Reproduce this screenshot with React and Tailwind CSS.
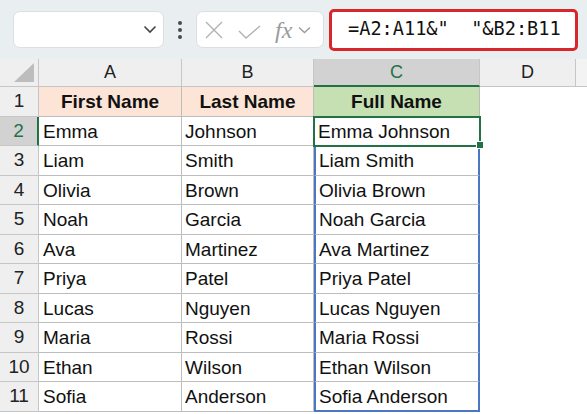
import React from "react";

const rows = [
  ["Emma", "Johnson"],
  ["Liam", "Smith"],
  ["Olivia", "Brown"],
  ["Noah", "Garcia"],
  ["Ava", "Martinez"],
  ["Priya", "Patel"],
  ["Lucas", "Nguyen"],
  ["Maria", "Rossi"],
  ["Ethan", "Wilson"],
  ["Sofia", "Anderson"],
];

const font = { fontFamily: '"Liberation Sans", Arial, sans-serif' };

export default function App() {
  return (
    <div className="w-[587px] h-[414px] overflow-hidden bg-white relative" style={font}>
      {/* toolbar */}
      <div className="h-[59px] bg-[#e9eef1] flex items-center">
        <div className="ml-[13px] w-[151px] h-[37px] bg-white rounded-[7px] border border-[#dcdfe2] flex items-center justify-end pr-[6px]">
          <svg width="14" height="9" viewBox="0 0 14 9">
            <path d="M1.5 1.5 L7 7 L12.5 1.5" fill="none" stroke="#444" strokeWidth="1.6" />
          </svg>
        </div>
        <div className="w-[32px] flex flex-col items-center gap-[3px]">
          <div className="w-[4px] h-[4px] rounded-full bg-[#4a4a4a]" />
          <div className="w-[4px] h-[4px] rounded-full bg-[#4a4a4a]" />
          <div className="w-[4px] h-[4px] rounded-full bg-[#4a4a4a]" />
        </div>
        <div className="w-[128px] h-[37px] bg-white rounded-[7px] border border-[#dcdfe2] flex items-center pl-[8px]">
          <svg width="18" height="18" viewBox="0 0 18 18" className="mr-[15px]">
            <path d="M1 1 L17 17 M17 1 L1 17" stroke="#b0b0b0" strokeWidth="1.3" />
          </svg>
          <svg width="23" height="14" viewBox="0 0 23 14" className="mr-[14px] mt-[4px]">
            <path d="M1 6 L8 13 L22 1" fill="none" stroke="#b0b0b0" strokeWidth="1.3" />
          </svg>
          <span className="text-[24px] italic text-[#9a9a9a] leading-none" style={{ fontFamily: '"Liberation Serif", serif' }}>fx</span>
          <svg width="13" height="8" viewBox="0 0 13 8" className="ml-[6px]">
            <path d="M1 1.5 L6.5 6.5 L12 1.5" fill="none" stroke="#9a9a9a" strokeWidth="1.3" />
          </svg>
        </div>
        <div className="ml-[5px] w-[249px] h-[42px] bg-white border-[3px] border-[#d9262b] rounded-[5px] flex items-center pl-[16px]">
          <span className="text-[18.6px] text-[#111] whitespace-pre leading-none" style={{ fontFamily: '"DejaVu Sans Mono", "Liberation Mono", monospace' }}>
            =A2:A11&amp;"  "&amp;B2:B11
          </span>
        </div>
      </div>

      {/* grid */}
      <div className="grid grid-cols-[39px_143px_132px_166px_96px_1fr] grid-rows-[28px_repeat(11,29.5px)] text-[19px] text-[#111]">
        {/* header row */}
        <div className="bg-[#efefef] border-r border-b border-[#c6c6c6] relative">
          <svg width="20" height="19" viewBox="0 0 20 19" className="absolute right-[4px] bottom-[4px]">
            <path d="M20 0 L20 19 L0 19 Z" fill="#bdbdbd" />
          </svg>
        </div>
        <div className="bg-[#efefef] border-r border-b border-[#c6c6c6] flex items-center justify-center text-[18px] text-[#222]">A</div>
        <div className="bg-[#efefef] border-r border-b border-[#c6c6c6] flex items-center justify-center text-[18px] text-[#222]">B</div>
        <div className="bg-[#d2d2d2] border-r border-[#c6c6c6] border-b-2 border-b-[#217346] flex items-center justify-center text-[18px] text-[#217346]">C</div>
        <div className="bg-[#efefef] border-r border-b border-[#c6c6c6] flex items-center justify-center text-[18px] text-[#222]">D</div>
        <div className="bg-[#f3f3f3] border-b border-[#c6c6c6]" />

        {/* row 1 */}
        <div className="bg-[#efefef] border-r border-b border-[#c6c6c6] flex items-center justify-center text-[#222]">1</div>
        <div className="bg-[#fce4d6] border-r border-b border-[#bdbdbd] flex items-center justify-center font-bold pt-[2px]">First Name</div>
        <div className="bg-[#fce4d6] border-r border-b border-[#bdbdbd] flex items-center justify-center font-bold pt-[2px]">Last Name</div>
        <div className="bg-[#c6e0b4] border-r border-b border-[#bdbdbd] flex items-center justify-center font-bold pt-[2px]">Full Name</div>
        <div />
        <div />

        {rows.map(([f, l], i) => {
          const n = i + 2;
          const sel = n === 2;
          const last = n === 11;
          return (
            <React.Fragment key={n}>
              <div
                className={
                  sel
                    ? "bg-[#d2d2d2] border-b border-[#c6c6c6] border-r-2 border-r-[#217346] flex items-center justify-center text-[#217346]"
                    : "bg-[#efefef] border-r border-b border-[#c6c6c6] flex items-center justify-center text-[#222]"
                }
              >
                {n}
              </div>
              <div className="border-r border-b border-[#bdbdbd] flex items-center pl-[4px] pt-[2px]">{f}</div>
              <div className="border-r border-b border-[#bdbdbd] flex items-center pl-[3px] pt-[2px]">{l}</div>
              <div
                className={
                  sel
                    ? "relative outline-2 outline-[#217346] -outline-offset-1 border-b border-[#bdbdbd] flex items-center pl-[4px] pt-[2px]"
                    : last
                    ? "border-2 border-[#4a76c4] border-t-0 flex items-center pl-[3px] pt-[2px]"
                    : "border-l-2 border-r-2 border-l-[#4a76c4] border-r-[#4a76c4] border-b border-b-[#bdbdbd] flex items-center pl-[3px] pt-[2px]"
                }
              >
                {f} {l}
                {sel && (
                  <div className="absolute right-[-4px] bottom-[-4px] w-[8px] h-[8px] bg-[#217346] border border-white" />
                )}
              </div>
              <div />
              <div />
            </React.Fragment>
          );
        })}
      </div>
    </div>
  );
}
